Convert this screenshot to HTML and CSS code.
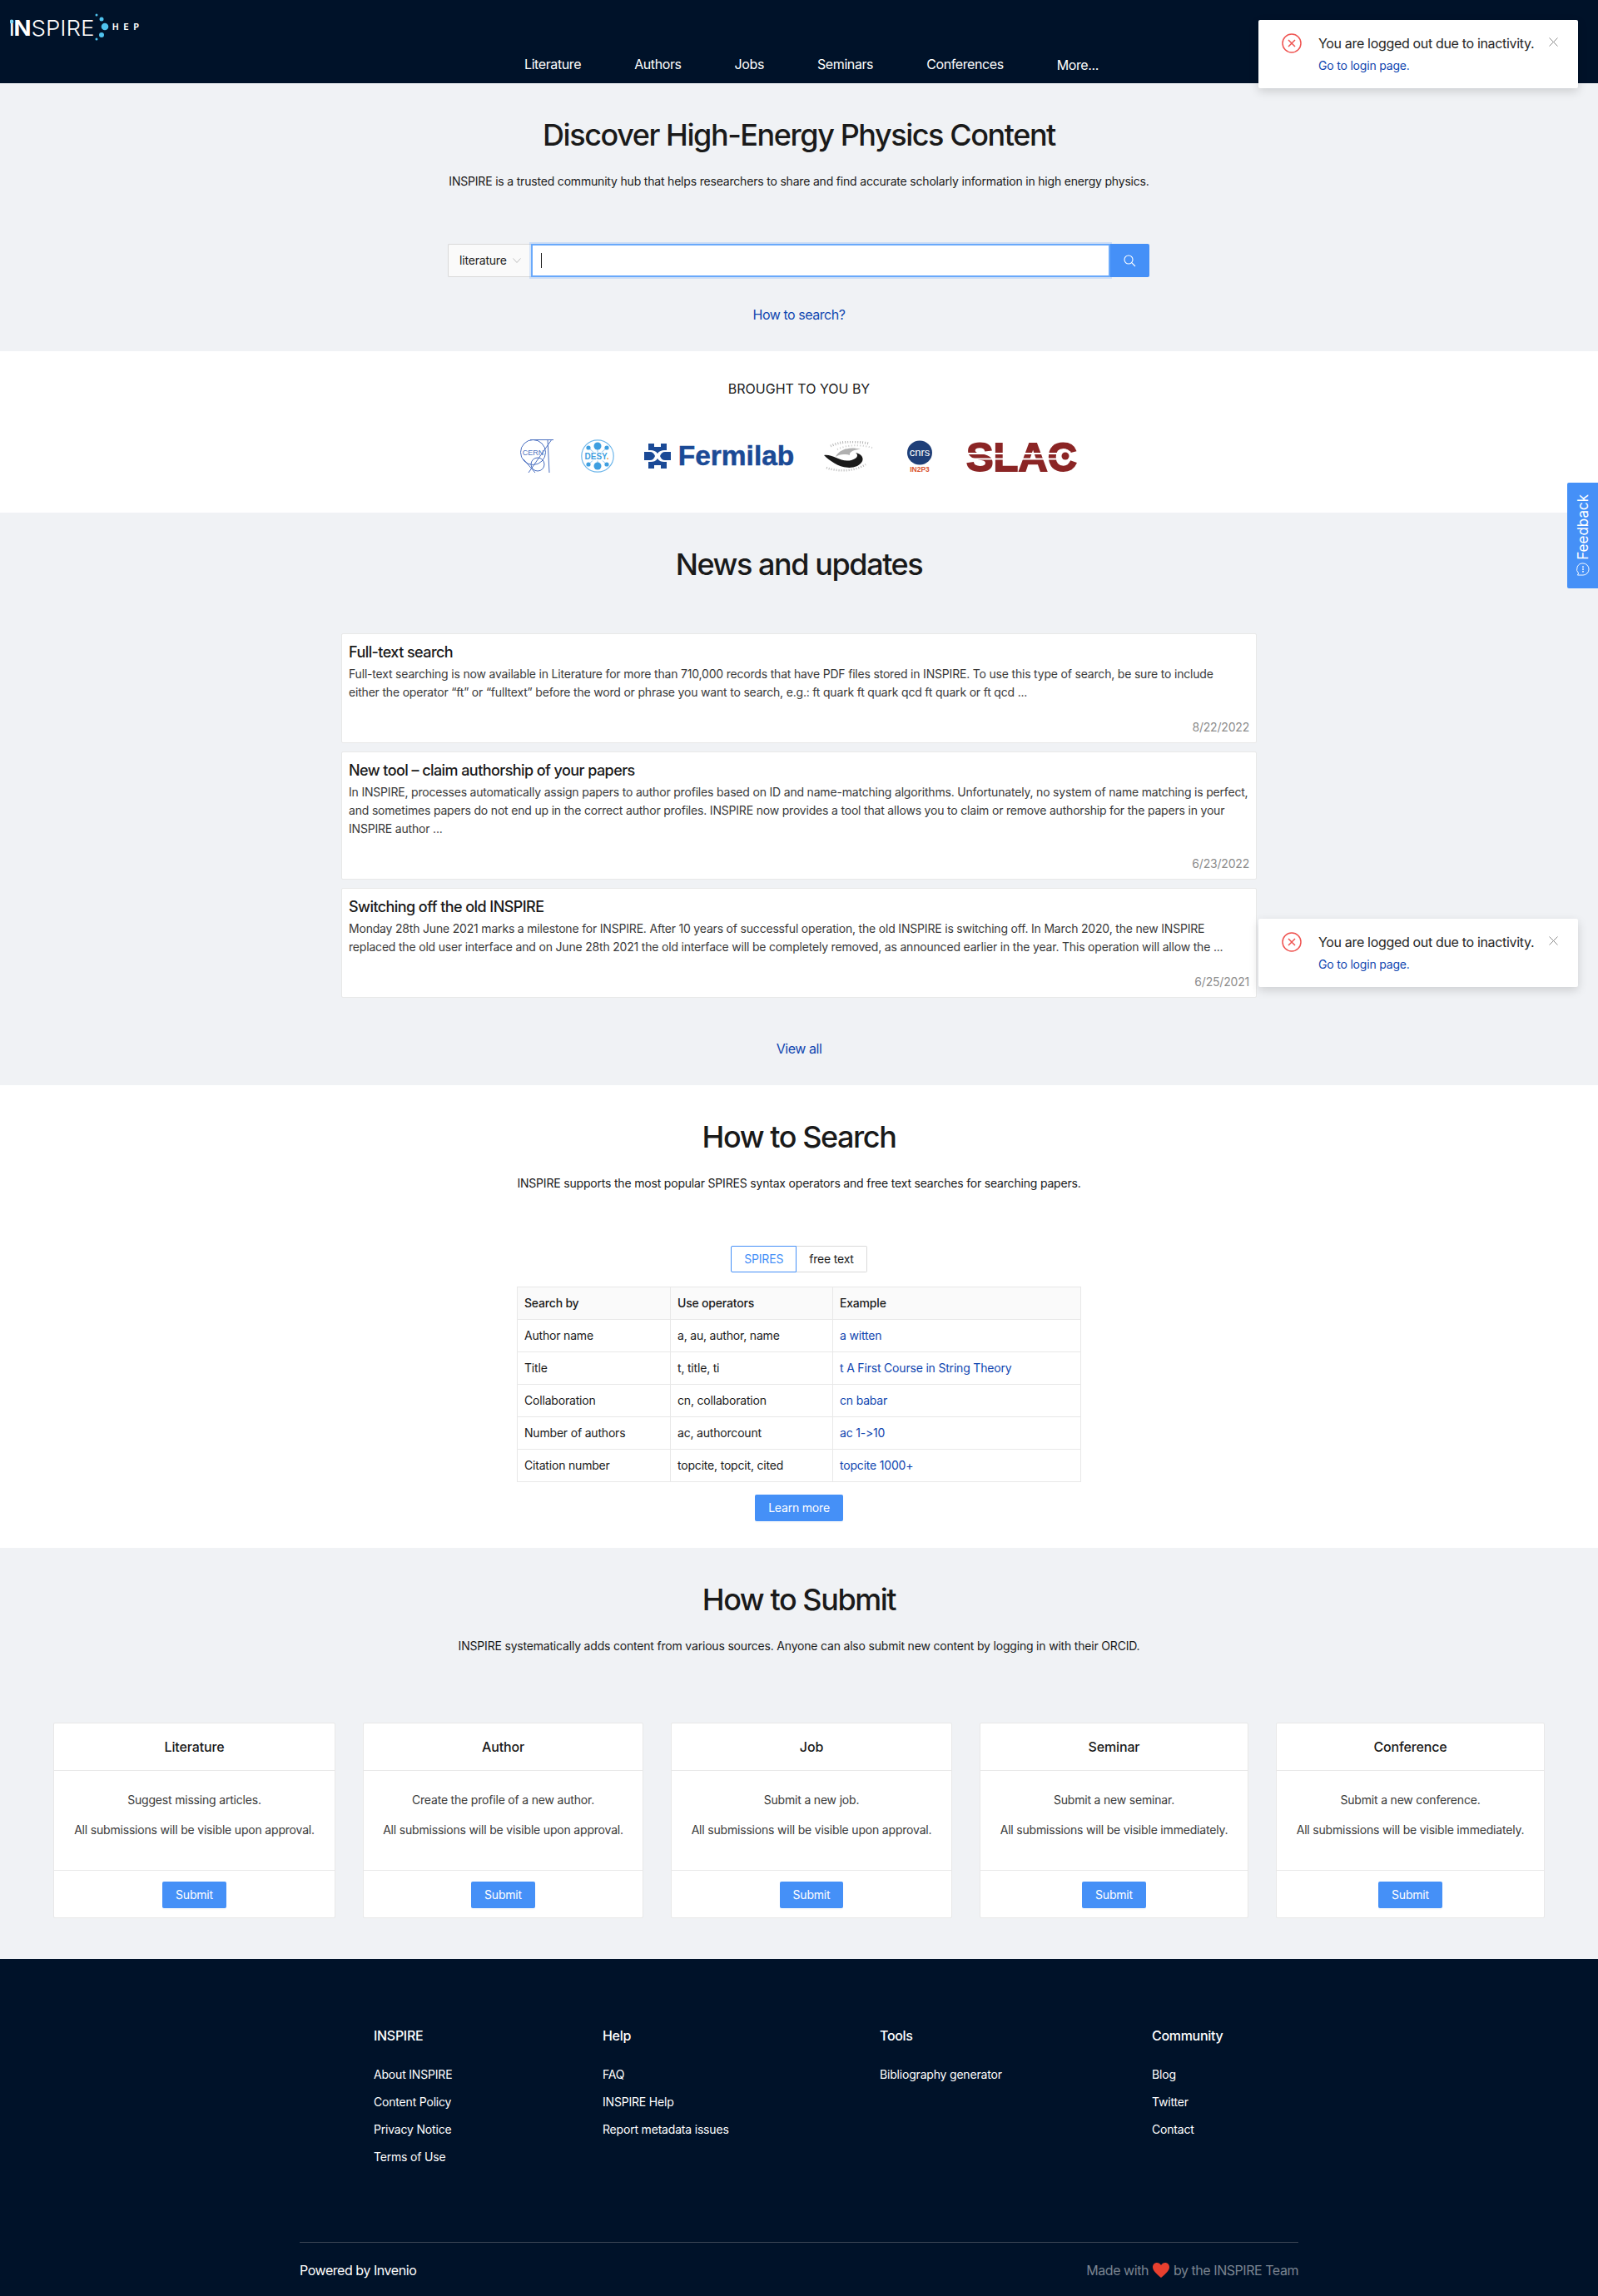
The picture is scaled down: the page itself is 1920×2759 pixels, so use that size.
FILE: index.html
```html
<!DOCTYPE html>
<html lang="en">
<head>
    <meta charset="UTF-8">
    <title>INSPIRE</title>
    <link rel="stylesheet" href="styles.css">
</head>
<body>
    <header class="header">
        <svg class="logo" width="170" height="36" viewBox="0 0 170 36">
            <circle cx="2" cy="12" r="2.400" fill="#7fd6f5"/>
            <text x="0" y="29" textLength="4.500" lengthAdjust="spacingAndGlyphs" class="logo-n">ı</text>
            <text x="4.500" y="29" textLength="21" lengthAdjust="spacingAndGlyphs" class="logo-n">N</text>
            <text x="25.500" y="29" textLength="76" lengthAdjust="spacingAndGlyphs" class="logo-spire">SPIRE</text>
            <circle cx="104" cy="4" r="1.500" fill="#4fc3ee"/>
            <circle cx="110" cy="9" r="2.500" fill="#4fc3ee"/>
            <circle cx="114" cy="18" r="4.300" fill="#4fc3ee"/>
            <circle cx="110" cy="28" r="3" fill="#4fc3ee"/>
            <circle cx="104" cy="33" r="1.500" fill="#4fc3ee"/>
            <text x="123" y="21.700" textLength="32" class="logo-hep">HEP</text>
        </svg>
        <nav class="nav">
            <a href="#">Literature</a>
            <a href="#">Authors</a>
            <a href="#">Jobs</a>
            <a href="#">Seminars</a>
            <a href="#">Conferences</a>
            <a href="#" class="nav-more">More...</a>
        </nav>
    </header>

    <section class="hero">
        <h1>Discover High-Energy Physics Content</h1>
        <p class="lead">INSPIRE is a trusted community hub that helps researchers to share and find accurate scholarly information in high energy physics.</p>
        <div class="search">
            <div class="search-select">
                <span>literature</span>
                <svg width="10" height="6" viewBox="0 0 10 6"><path d="M.5.5 5 5.500 9.500.5" fill="none" stroke="#bfbfbf"/></svg>
            </div>
            <div class="search-input"><span class="cursor"></span></div>
            <div class="search-btn">
                <svg width="15" height="15" viewBox="0 0 15 15" fill="none" stroke="#fff" stroke-width="1.100"><circle cx="6" cy="6" r="5"/><path d="M9.700 9.700 14 14"/></svg>
            </div>
        </div>
        <a href="#" class="link how-link">How to search?</a>
    </section>

    <section class="brought">
        <div class="brought-title">BROUGHT TO YOU BY</div>
        <div class="logos">
            <svg class="l-cern" width="40" height="40" viewBox="0 0 40 40" fill="none" stroke="#4a6fc0">
                <circle cx="15.500" cy="15.500" r="15"/>
                <circle cx="21" cy="30" r="8"/>
                <path d="M12 .5H40M38 0 10 40M33 0 35 40M4 24 18 40"/>
                <text x="15.500" y="18.500" class="cern-text">CERN</text>
            </svg>
            <svg class="l-desy" width="40" height="40" viewBox="0 0 40 40">
                <circle cx="20" cy="20" r="19.200" fill="#fff" stroke="#6db6ea" stroke-width="1.200"/>
                <path d="M20 8V32M8 9 32 31M32 9 8 31" stroke="#6db6ea" stroke-width=".8"/>
                <rect x="5" y="15.500" width="30" height="10" fill="#fff"/>
                <circle cx="20" cy="8" r="4.500" fill="#3f9fe0"/>
                <circle cx="20" cy="32" r="4.500" fill="#3f9fe0"/>
                <circle cx="9" cy="10" r="2.600" fill="#3f9fe0"/>
                <circle cx="31" cy="10" r="2.600" fill="#3f9fe0"/>
                <circle cx="9" cy="30" r="2.600" fill="#3f9fe0"/>
                <circle cx="31" cy="30" r="2.600" fill="#3f9fe0"/>
                <text x="19" y="24" class="desy-text">DESY<tspan fill="#f0923c">.</tspan></text>
            </svg>
            <div class="fermilab">
                <svg width="32" height="30" viewBox="0 0 32 30" fill="#1b4a96">
                    <path d="M5 0h7v4h8V0h7v8h-3C21 8 18 9 16 12 14 9 11 8 8 8H5z"/>
                    <path d="M5 30h7v-4h8v4h7v-8h-3C21 22 18 21 16 18 14 21 11 22 8 22H5z"/>
                    <path d="M0 10h7C10 10 12 12 13 15 12 18 10 20 7 20H0z"/>
                    <path d="M32 10h-7C22 10 20 12 19 15 20 18 22 20 25 20h7z"/>
                </svg>
                <span>Fermilab</span>
            </div>
            <svg class="l-ihep" width="60" height="37" viewBox="0 0 60 37" fill="none">
                <path d="M8 6C18 1 34-1 54 3" stroke="#b5b5b5" stroke-width="3" stroke-dasharray="1 2"/>
                <path d="M16 10C28 4 44 4 58 8" stroke="#c9c9c9" stroke-width="2" stroke-dasharray="1 2.500"/>
                <path d="M3 32C16 37 36 37 50 28" stroke="#b5b5b5" stroke-width="2.500" stroke-dasharray="1 2"/>
                <path d="M14 19C18 10 32 6 44 10 36 10 30 13 31 17 24 15 18 16 14 19z" fill="#b0b0b0"/>
                <path d="M0 17C10 15 20 26 33 23 40 21 42 17 38 14 48 16 50 25 40 30 26 36 10 27 0 17z" fill="#1a1a1a"/>
            </svg>
            <svg class="l-cnrs" width="32" height="39" viewBox="0 0 32 39">
                <ellipse cx="16" cy="15" rx="15" ry="14.500" fill="#1f3f78"/>
                <text x="16" y="19" class="cnrs-text">cnrs</text>
                <text x="16" y="38" class="in2p3-text">IN2P3</text>
            </svg>
            <svg class="l-slac" width="135" height="62" viewBox="0 -11 135 62">
                <text x="1" y="38" textLength="133" lengthAdjust="spacingAndGlyphs" class="slac-text">SLAC</text>
                <path d="M0 17H112M0 23.500H112" stroke="#fff" stroke-width="1.800"/>
                <circle cx="120" cy="20" r="8" fill="#fff"/>
                <circle cx="120" cy="20" r="4.500" fill="#8b2525"/>
            </svg>
        </div>
    </section>

    <section class="news">
        <h2>News and updates</h2>
        <div class="news-list">
            <article class="news-card">
                <h3>Full-text search</h3>
                <p>Full-text searching is now available in Literature for more than 710,000 records that have PDF files stored in INSPIRE. To use this type of search, be sure to include<br>either the operator “ft” or “fulltext” before the word or phrase you want to search, e.g.: ft quark ft quark qcd ft quark or ft qcd ...</p>
                <div class="news-date">8/22/2022</div>
            </article>
            <article class="news-card">
                <h3>New tool – claim authorship of your papers</h3>
                <p>In INSPIRE, processes automatically assign papers to author profiles based on ID and name-matching algorithms. Unfortunately, no system of name matching is perfect, and sometimes papers do not end up in the correct author profiles. INSPIRE now provides a tool that allows you to claim or remove authorship for the papers in your INSPIRE author ...</p>
                <div class="news-date">6/23/2022</div>
            </article>
            <article class="news-card">
                <h3>Switching off the old INSPIRE</h3>
                <p>Monday 28th June 2021 marks a milestone for INSPIRE. After 10 years of successful operation, the old INSPIRE is switching off. In March 2020, the new INSPIRE replaced the old user interface and on June 28th 2021 the old interface will be completely removed, as announced earlier in the year. This operation will allow the ...</p>
                <div class="news-date">6/25/2021</div>
            </article>
        </div>
        <a href="#" class="link view-all">View all</a>
    </section>

    <section class="how-search">
        <h2>How to Search</h2>
        <p class="lead">INSPIRE supports the most popular SPIRES syntax operators and free text searches for searching papers.</p>
        <div class="tabs">
            <span class="tab tab-active">SPIRES</span>
            <span class="tab">free text</span>
        </div>
        <table class="syntax">
            <thead>
                <tr><th>Search by</th><th>Use operators</th><th>Example</th></tr>
            </thead>
            <tbody>
                <tr><td>Author name</td><td>a, au, author, name</td><td><a href="#" class="link">a witten</a></td></tr>
                <tr><td>Title</td><td>t, title, ti</td><td><a href="#" class="link">t A First Course in String Theory</a></td></tr>
                <tr><td>Collaboration</td><td>cn, collaboration</td><td><a href="#" class="link">cn babar</a></td></tr>
                <tr><td>Number of authors</td><td>ac, authorcount</td><td><a href="#" class="link">ac 1-&gt;10</a></td></tr>
                <tr><td>Citation number</td><td>topcite, topcit, cited</td><td><a href="#" class="link">topcite 1000+</a></td></tr>
            </tbody>
        </table>
        <a href="#" class="btn learn-more">Learn more</a>
    </section>

    <section class="how-submit">
        <h2>How to Submit</h2>
        <p class="lead">INSPIRE systematically adds content from various sources. Anyone can also submit new content by logging in with their ORCID.</p>
        <div class="submit-grid">
            <div class="submit-card">
                <div class="submit-head">Literature</div>
                <div class="submit-body"><p>Suggest missing articles.</p><p>All submissions will be visible upon approval.</p></div>
                <div class="submit-foot"><a href="#" class="btn">Submit</a></div>
            </div>
            <div class="submit-card">
                <div class="submit-head">Author</div>
                <div class="submit-body"><p>Create the profile of a new author.</p><p>All submissions will be visible upon approval.</p></div>
                <div class="submit-foot"><a href="#" class="btn">Submit</a></div>
            </div>
            <div class="submit-card">
                <div class="submit-head">Job</div>
                <div class="submit-body"><p>Submit a new job.</p><p>All submissions will be visible upon approval.</p></div>
                <div class="submit-foot"><a href="#" class="btn">Submit</a></div>
            </div>
            <div class="submit-card">
                <div class="submit-head">Seminar</div>
                <div class="submit-body"><p>Submit a new seminar.</p><p>All submissions will be visible immediately.</p></div>
                <div class="submit-foot"><a href="#" class="btn">Submit</a></div>
            </div>
            <div class="submit-card">
                <div class="submit-head">Conference</div>
                <div class="submit-body"><p>Submit a new conference.</p><p>All submissions will be visible immediately.</p></div>
                <div class="submit-foot"><a href="#" class="btn">Submit</a></div>
            </div>
        </div>
    </section>

    <footer class="footer">
        <div class="footer-cols">
            <div class="footer-col">
                <h4>INSPIRE</h4>
                <a href="#">About INSPIRE</a>
                <a href="#">Content Policy</a>
                <a href="#">Privacy Notice</a>
                <a href="#">Terms of Use</a>
            </div>
            <div class="footer-col">
                <h4>Help</h4>
                <a href="#">FAQ</a>
                <a href="#">INSPIRE Help</a>
                <a href="#">Report metadata issues</a>
            </div>
            <div class="footer-col">
                <h4>Tools</h4>
                <a href="#">Bibliography generator</a>
            </div>
            <div class="footer-col">
                <h4>Community</h4>
                <a href="#">Blog</a>
                <a href="#">Twitter</a>
                <a href="#">Contact</a>
            </div>
        </div>
        <div class="footer-bottom">
            <span>Powered by Invenio</span>
            <span class="made-with">Made with
                <svg width="20" height="18" viewBox="0 0 20 18"><path d="M10 18C4 13 0 9.500 0 5.300 0 2.200 2.200 0 5 0c2 0 4 1 5 3 1-2 3-3 5-3 2.800 0 5 2.200 5 5.300C20 9.500 16 13 10 18z" fill="#e8402f"/></svg>
                by the INSPIRE Team</span>
        </div>
    </footer>

    <div class="toast toast-top">
        <svg class="toast-icon" width="24" height="24" viewBox="0 0 24 24" fill="none" stroke="#ef5350" stroke-width="1.500"><circle cx="12" cy="12" r="11"/><path d="M8 8l8 8M16 8l-8 8"/></svg>
        <div class="toast-text">
            <div class="toast-msg">You are logged out due to inactivity.</div>
            <a href="#" class="link">Go to login page.</a>
        </div>
        <svg class="toast-close" width="11" height="11" viewBox="0 0 11 11" stroke="#8c8c8c"><path d="M.5.5l10 10M10.500.5l-10 10"/></svg>
    </div>
    <div class="toast toast-mid">
        <svg class="toast-icon" width="24" height="24" viewBox="0 0 24 24" fill="none" stroke="#ef5350" stroke-width="1.500"><circle cx="12" cy="12" r="11"/><path d="M8 8l8 8M16 8l-8 8"/></svg>
        <div class="toast-text">
            <div class="toast-msg">You are logged out due to inactivity.</div>
            <a href="#" class="link">Go to login page.</a>
        </div>
        <svg class="toast-close" width="11" height="11" viewBox="0 0 11 11" stroke="#8c8c8c"><path d="M.5.5l10 10M10.500.5l-10 10"/></svg>
    </div>

    <div class="feedback">
        <span>Feedback</span>
        <svg width="16" height="16" viewBox="0 0 17 17" fill="none" stroke="#fff"><path d="M8.500 1a7.500 7.500 0 1 1 0 15H1.500l1.300-2.200A7.500 7.500 0 0 1 8.500 1z"/><circle cx="8.500" cy="5.500" r=".6" fill="#fff"/><circle cx="8.500" cy="8.500" r=".6" fill="#fff"/><circle cx="8.500" cy="11.500" r=".6" fill="#fff"/></svg>
    </div>
</body>
</html>
```

FILE: styles.css
```css
* {
    box-sizing: border-box;
}
body {
    margin: 0;
    font-family: Inter, "Noto Sans", sans-serif;
    font-size: 14px;
    line-height: 22px;
    letter-spacing: -0.19px;
    font-feature-settings: "calt" 0;
    color: #1a1a1a;
    background: #f0f2f5;
}
h1, h2, h3, h4, p {
    margin: 0;
}
a {
    text-decoration: none;
}
.link {
    color: #0f46b0;
}

/* header */
.header {
    height: 100px;
    background: #001229;
    display: flex;
    flex-direction: column;
    padding: 14px 0 0 12px;
}
.logo {
    display: block;
}
.logo text {
    fill: #fff;
    font-family: Inter, sans-serif;
    letter-spacing: 0;
}
.logo-n {
    font-size: 26px;
    font-weight: 700;
}
.logo-spire {
    font-size: 26px;
    font-weight: 300;
}
.logo-hep {
    font-size: 10px;
    font-weight: 700;
}
.nav {
    display: flex;
    gap: 64px;
    margin: 15px 0 0 618px;
}
.nav a {
    color: #fff;
    font-size: 16px;
    font-weight: 400;
    line-height: 24px;
    letter-spacing: -0.4px;
}
.nav-more {
    position: relative;
    top: 1px;
}

/* sections */
.hero, .news, .how-search, .how-submit {
    display: flex;
    flex-direction: column;
    align-items: center;
    text-align: center;
}
.hero {
    height: 322px;
    padding-top: 40px;
}
h1, h2 {
    font-size: 36px;
    font-weight: 500;
    line-height: 44px;
    letter-spacing: -1.44px;
}
.lead {
    margin-top: 23px;
}
.search {
    display: flex;
    width: 843px;
    height: 40px;
    margin-top: 64px;
    margin-right: 1px;
    text-align: left;
}
.search-select {
    width: 100px;
    background: #fafafa;
    border: 1px solid #d9d9d9;
    border-right: 0;
    border-radius: 2px 0 0 2px;
    display: flex;
    align-items: center;
    gap: 7px;
    padding-left: 13px;
}
.search-input {
    flex: 1;
    background: #fff;
    border: 2px solid #69a9fb;
    box-shadow: 0 0 0 2px rgba(69, 144, 247, 0.2);
    display: flex;
    align-items: center;
    padding-left: 10px;
}
.cursor {
    width: 1px;
    height: 18px;
    background: #1a1a1a;
}
.search-btn {
    width: 47px;
    background: #4590f7;
    border-radius: 0 2px 2px 0;
    display: flex;
    align-items: center;
    justify-content: center;
    position: relative;
}
.how-link {
    margin-top: 33px;
    font-size: 16px;
    line-height: 24px;
    letter-spacing: -0.45px;
}

.brought {
    height: 194px;
    background: #fff;
    padding-top: 33px;
    text-align: center;
}
.brought-title {
    font-size: 16px;
    font-weight: 400;
    line-height: 24px;
    letter-spacing: 0;
}
.logos {
    display: flex;
    align-items: center;
    justify-content: center;
    height: 40px;
    margin-top: 49px;
    gap: 36px;
}
.l-desy {
    margin-left: -3px;
}
.l-cnrs, .l-slac {
    margin-left: 3px;
}
.logos text {
    letter-spacing: 0;
    font-family: "Liberation Sans", sans-serif;
}
.cern-text {
    fill: #4a6fc0;
    stroke: none;
    font-size: 9px;
    text-anchor: middle;
}
.desy-text {
    fill: #3f9fe0;
    font-size: 10px;
    font-weight: 700;
    text-anchor: middle;
}
.fermilab {
    display: flex;
    align-items: center;
    gap: 9px;
    color: #1b4a96;
    font-family: "Liberation Sans", sans-serif;
    font-size: 33.500px;
    font-weight: 700;
    line-height: 40px;
    letter-spacing: 0;
    -webkit-text-stroke: 0.5px #1b4a96;
}
.cnrs-text {
    fill: #fff;
    font-size: 13px;
    text-anchor: middle;
}
.in2p3-text {
    fill: #d9532c;
    font-size: 8.500px;
    font-weight: 700;
    text-anchor: middle;
}
.slac-text {
    fill: #8b2525;
    stroke: #8b2525;
    stroke-width: 1.800px;
    font-size: 49px;
    font-weight: 700;
}

.news {
    height: 688px;
    padding-top: 40px;
}
.news-list {
    width: 1100px;
    margin-top: 61px;
    display: flex;
    flex-direction: column;
    gap: 10px;
    text-align: left;
}
.news-card {
    background: #fff;
    border: 1px solid #e8e8e8;
    border-radius: 2px;
    padding: 8px 8px 7px;
}
.news-card h3 {
    font-size: 18px;
    font-weight: 500;
    line-height: 28px;
    margin-bottom: 1px;
    letter-spacing: -0.57px;
}
.news-card p {
    color: #3a3a3a;
}
.news-date {
    margin-top: 20px;
    text-align: right;
    color: #8c8c8c;
}
.view-all {
    margin-top: 49px;
    font-size: 16px;
    line-height: 24px;
    letter-spacing: -0.45px;
}

.how-search {
    height: 556px;
    background: #fff;
    padding-top: 40px;
}
.tabs {
    display: flex;
    margin-top: 64px;
}
.tab {
    height: 32px;
    border: 1px solid #d9d9d9;
    padding: 0 15px;
    line-height: 30px;
}
.tab:last-child {
    border-left: 0;
    border-radius: 0 2px 2px 0;
}
.tab-active {
    color: #4590f7;
    border-color: #4590f7;
    border-radius: 2px 0 0 2px;
}
.syntax {
    width: 678px;
    margin-top: 17px;
    border-collapse: collapse;
    table-layout: fixed;
    text-align: left;
}
.syntax th, .syntax td {
    height: 39px;
    border: 1px solid #e8e8e8;
    padding: 0 8px;
    font-weight: 400;
}
.syntax th {
    background: #fafafa;
    font-weight: 500;
}
.syntax th:nth-child(1) {
    width: 184px;
}
.syntax th:nth-child(2) {
    width: 195px;
}
.btn {
    display: inline-block;
    height: 32px;
    padding: 0 16px;
    background: #4590f7;
    color: #fff;
    line-height: 32px;
    border-radius: 2px;
    box-shadow: 0 2px 0 rgba(0, 0, 0, 0.016);
}
.learn-more {
    margin-top: 15px;
}

.how-submit {
    height: 494px;
    padding-top: 40px;
}
.submit-grid {
    display: grid;
    grid-template-columns: 339px 337px 338px 323px 323px;
    gap: 33px;
    margin-top: 81px;
    width: 1792px;
}
.submit-card {
    background: #fff;
    border: 1px solid #e8e8e8;
    border-radius: 2px;
    height: 235px;
    display: flex;
    flex-direction: column;
}
.submit-head {
    height: 57px;
    border-bottom: 1px solid #e8e8e8;
    font-size: 16px;
    font-weight: 500;
    line-height: 56px;
    letter-spacing: -0.15px;
}
.submit-body {
    height: 120px;
    border-bottom: 1px solid #e8e8e8;
    padding-top: 24px;
}
.submit-body p {
    margin-bottom: 14px;
    color: #3a3a3a;
}
.submit-foot {
    flex: 1;
    padding-top: 13px;
}

.footer {
    height: 405px;
    background: #001229;
    color: #fff;
    padding-top: 80px;
}
.footer-cols {
    display: flex;
    height: 260px;
}
.footer-col {
    display: flex;
    flex-direction: column;
    gap: 11px;
}
.footer-col:nth-child(1) {
    margin-left: 449px;
    width: 275px;
}
.footer-col:nth-child(2) {
    width: 333px;
}
.footer-col:nth-child(3) {
    width: 327px;
}
.footer-col h4 {
    font-size: 16px;
    font-weight: 500;
    line-height: 24px;
    margin-bottom: 13px;
    letter-spacing: -0.3px;
}
.footer-col a {
    color: #fff;
}
.footer-bottom {
    margin: 0 360px;
    border-top: 1px solid #3b4656;
    padding-top: 21px;
    display: flex;
    justify-content: space-between;
    font-size: 16px;
    line-height: 24px;
    letter-spacing: -0.45px;
}
.made-with {
    color: #7a8490;
    display: flex;
    align-items: center;
    gap: 5px;
}

/* notifications and feedback tab sit over the page */
.toast {
    position: absolute;
    left: 1512px;
    width: 384px;
    height: 82px;
    background: #fff;
    border-radius: 2px;
    box-shadow: 0 4px 12px rgba(0, 0, 0, 0.15);
    display: flex;
    padding: 16px 24px;
}
.toast-top {
    top: 24px;
}
.toast-mid {
    top: 1104px;
}
.toast-icon {
    margin: 0 20px 0 4px;
    flex: none;
}
.toast-msg {
    font-size: 16px;
    line-height: 24px;
    letter-spacing: -0.33px;
    color: #262626;
    margin-bottom: 4px;
}
.toast-text {
    flex: 1;
}
.toast-close {
    margin-top: 5px;
}
.feedback {
    position: fixed;
    right: 0;
    top: 580px;
    width: 37px;
    height: 127px;
    background: #4590f7;
    border-radius: 2px 0 0 2px;
    display: flex;
    flex-direction: column;
    align-items: center;
    justify-content: space-between;
    padding: 14px 0 15px;
    color: #fff;
    font-size: 17px;
    letter-spacing: 0;
}
.feedback span {
    writing-mode: vertical-rl;
    transform: rotate(180deg);
}
```
